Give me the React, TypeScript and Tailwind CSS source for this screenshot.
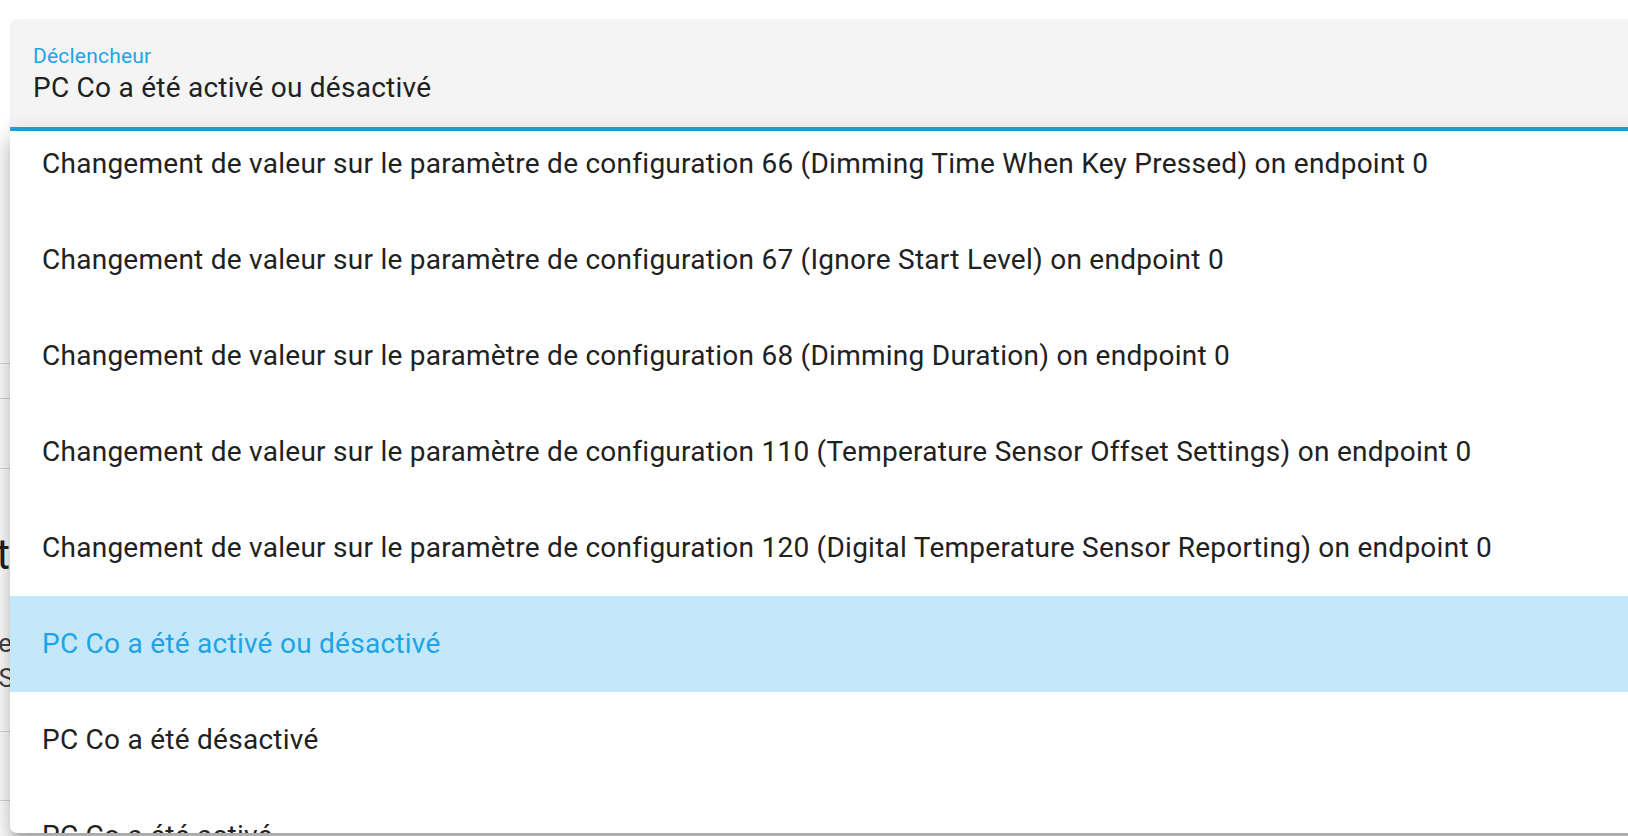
import React from "react";

const items = [
  "Changement de valeur sur le paramètre de configuration 66 (Dimming Time When Key Pressed) on endpoint 0",
  "Changement de valeur sur le paramètre de configuration 67 (Ignore Start Level) on endpoint 0",
  "Changement de valeur sur le paramètre de configuration 68 (Dimming Duration) on endpoint 0",
  "Changement de valeur sur le paramètre de configuration 110 (Temperature Sensor Offset Settings) on endpoint 0",
  "Changement de valeur sur le paramètre de configuration 120 (Digital Temperature Sensor Reporting) on endpoint 0",
  "PC Co a été activé ou désactivé",
  "PC Co a été désactivé",
  "PC Co a été activé",
];

export default function App() {
  return (
    <div
      className="relative w-[1628px] h-[836px] overflow-hidden bg-white text-[#212121]"
      style={{ fontFamily: "Roboto, 'Liberation Sans', sans-serif" }}
    >
      {/* page behind the dropdown (only a sliver shows at the left) */}
      <div className="flex flex-col w-[10px] overflow-hidden">
        <div className="h-[363px]" />
        <div className="h-[35px] border-t border-[#d6d6d6]" />
        <div className="h-[70px] border-t border-[#d6d6d6]" />
        <div className="h-[263px] border-t border-[#d6d6d6] flex flex-col items-end">
          <div className="mt-[62px] flex justify-end w-[10px] overflow-hidden whitespace-nowrap text-[42px] leading-[48px] text-[#212121]">
            <span>Test</span>
          </div>
          <div className="mt-[47px] flex flex-col items-end w-[10px] overflow-hidden whitespace-nowrap text-[26px] leading-[35px] text-[#444]">
            <span className="-mr-[2px]">Une</span>
            <span className="-mr-[4px]">AS</span>
          </div>
        </div>
        <div className="h-[69px] border-t border-[#d6d6d6]" />
        <div className="h-[40px] border-t border-[#d6d6d6]" />
      </div>

      {/* text field */}
      <div className="absolute left-[10px] top-[19px] w-[1640px] h-[112px] rounded-t-[7px] bg-[#f4f4f4] border-b-4 border-[#1ea4e6]">
        <div className="pl-[23px] pt-[27px] text-[21px] leading-[21px] tracking-[0.2px] text-[#1ea4e6]">
          Déclencheur
        </div>
        <div className="pl-[23px] pt-[7px] text-[28px] leading-[28px] tracking-[0.25px] text-[#212121]">
          PC Co a été activé ou désactivé
        </div>
      </div>

      {/* dropdown menu */}
      <div
        className="absolute left-[10px] top-[131px] w-[1640px] h-[702px] bg-white rounded-b-[7px] overflow-hidden"
        style={{
          boxShadow:
            "0 9px 9px -5px rgba(0,0,0,0.2), 0 14px 17px 2px rgba(0,0,0,0.14), 0 5px 24px 4px rgba(0,0,0,0.12)",
        }}
      >
        <ul className="-mt-[15px] flex flex-col">
          {items.map((t, i) => {
            const sel = i === 5;
            return (
              <li
                key={i}
                className={
                  sel
                    ? "h-[96px] flex items-center pl-[32px] whitespace-nowrap text-[28px] tracking-[0.26px] bg-[#c3e8fa] text-[#1ea4e6]"
                    : "h-[96px] flex items-center pl-[32px] whitespace-nowrap text-[28px] tracking-[0.26px] text-[#212121]"
                }
              >
                {t}
              </li>
            );
          })}
        </ul>
      </div>
    </div>
  );
}
